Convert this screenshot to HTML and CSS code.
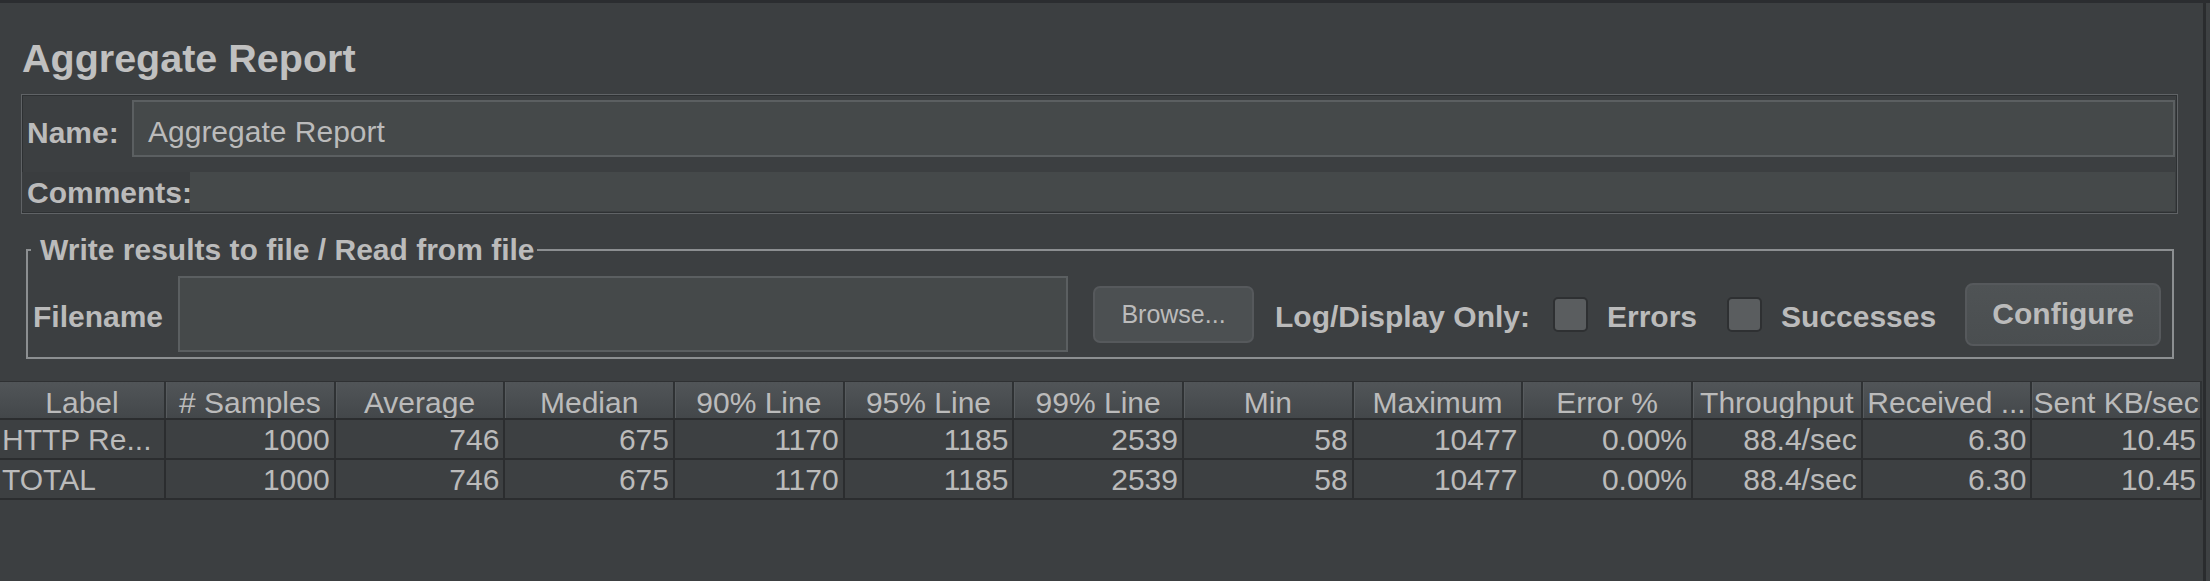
FILE: index.html
```html
<!DOCTYPE html>
<html>
<head>
<meta charset="utf-8">
<title>Aggregate Report</title>
<link rel="stylesheet" href="styles.css">
</head>
<body>
<div class="topstrip"></div>
<div class="frame">
  <div class="content">
    <div class="top-area">
      <div class="title">Aggregate Report</div>
      <div class="name-panel">
        <div class="row-name">
          <div class="lbl name-lbl">Name:</div>
          <div class="name-field">Aggregate Report</div>
        </div>
        <div class="row-comments">
          <div class="lbl comments-lbl">Comments:</div>
          <div class="comments-field"></div>
        </div>
      </div>
      <div class="fileset">
        <div class="legend">Write results to file / Read from file</div>
        <div class="file-row">
          <div class="lbl file-lbl">Filename</div>
          <div class="file-field"></div>
          <div class="btn browse">Browse...</div>
          <div class="lbl log-lbl">Log/Display Only:</div>
          <div class="check check-errors"></div>
          <div class="lbl check-lbl">Errors</div>
          <div class="check check-succ"></div>
          <div class="lbl check-lbl">Successes</div>
          <div class="btn configure">Configure</div>
        </div>
      </div>
    </div>
    <div class="table">
      <div class="thead">
        <div class="th">Label</div>
        <div class="th"># Samples</div>
        <div class="th">Average</div>
        <div class="th">Median</div>
        <div class="th">90% Line</div>
        <div class="th">95% Line</div>
        <div class="th">99% Line</div>
        <div class="th">Min</div>
        <div class="th">Maximum</div>
        <div class="th">Error %</div>
        <div class="th">Throughput</div>
        <div class="th">Received ...</div>
        <div class="th">Sent KB/sec</div>
      </div>
      <div class="trow">
        <div class="td first">HTTP Re...</div>
        <div class="td">1000</div>
        <div class="td">746</div>
        <div class="td">675</div>
        <div class="td">1170</div>
        <div class="td">1185</div>
        <div class="td">2539</div>
        <div class="td">58</div>
        <div class="td">10477</div>
        <div class="td">0.00%</div>
        <div class="td">88.4/sec</div>
        <div class="td">6.30</div>
        <div class="td">10.45</div>
      </div>
      <div class="trow">
        <div class="td first">TOTAL</div>
        <div class="td">1000</div>
        <div class="td">746</div>
        <div class="td">675</div>
        <div class="td">1170</div>
        <div class="td">1185</div>
        <div class="td">2539</div>
        <div class="td">58</div>
        <div class="td">10477</div>
        <div class="td">0.00%</div>
        <div class="td">88.4/sec</div>
        <div class="td">6.30</div>
        <div class="td">10.45</div>
      </div>
    </div>
  </div>
  <div class="edge"></div>
  <div class="rest"></div>
</div>
</body>
</html>
```

FILE: styles.css
```css
html, body {
  margin: 0;
  padding: 0;
}
body {
  width: 2210px;
  height: 581px;
  overflow: hidden;
  background: #3c3f41;
  color: #bbbbbb;
  font-family: "Liberation Sans", Arial, sans-serif;
}
.topstrip {
  height: 3px;
  background: #2b2d30;
}
.frame {
  display: flex;
  height: 578px;
}
.content {
  width: 2203px;
  flex-shrink: 0;
}
.edge {
  width: 3px;
  background: #2a2c2e;
}
.rest {
  flex: 1;
  background: #3e4143;
}
.top-area {
  padding: 0 25px 0 21px;
}
.title {
  font-size: 39.5px;
  font-weight: bold;
  line-height: 46px;
  margin: 32px 0 13px 1px;
  color: #c0c0c0;
  white-space: nowrap;
}
.lbl {
  font-size: 30px;
  font-weight: bold;
  line-height: 34px;
  white-space: nowrap;
  flex-shrink: 0;
}
.name-panel {
  border: 1px solid #606366;
  box-shadow: inset 0 0 0 1px #2e3133;
  padding: 5px 2px 2px 0;
}
.row-name {
  display: flex;
  align-items: center;
  height: 57px;
  padding-left: 5px;
}
.name-lbl {
  width: 105px;
  margin-top: 8px;
}
.name-field {
  flex: 1;
  box-sizing: border-box;
  height: 57px;
  border: 2px solid #5b5f61;
  background: #45494a;
  font-size: 30px;
  line-height: 34px;
  padding: 7px 0 0 14px;
  display: flex;
  align-items: center;
  white-space: nowrap;
}
.row-comments {
  display: flex;
  align-items: center;
  height: 39px;
  margin-top: 15px;
}
.comments-lbl {
  box-sizing: border-box;
  width: 168px;
  height: 39px;
  padding: 4px 0 0 5px;
  line-height: 34px;
  background: #3a3d3f;
}
.comments-field {
  flex: 1;
  height: 39px;
  background: #45494a;
}
.fileset {
  position: relative;
  margin: 35px 4px 0 5px;
  border: 2px solid #8c8f91;
  padding: 25px 13px 5px 5px;
}
.legend {
  position: absolute;
  left: 3px;
  top: -18px;
  padding: 0 2px 0 9px;
  background: #3c3f41;
  font-size: 30px;
  font-weight: bold;
  line-height: 34px;
  white-space: nowrap;
}
.file-row {
  display: flex;
  align-items: center;
  height: 76px;
}
.file-row .lbl {
  margin-top: 5px;
}
.file-lbl {
  width: 145px;
}
.file-field {
  box-sizing: border-box;
  width: 890px;
  height: 76px;
  border: 2px solid #5b5f61;
  background: #45494a;
  flex-shrink: 0;
}
.btn {
  box-sizing: border-box;
  display: flex;
  align-items: center;
  justify-content: center;
  border: 2px solid #56595c;
  background: #4c5052;
  color: #bbbbbb;
  flex-shrink: 0;
}
.browse {
  margin-left: 25px;
  width: 161px;
  height: 57px;
  border-radius: 7px;
  font-size: 25px;
}
.log-lbl {
  margin-left: 21px;
  width: 257px;
}
.check {
  box-sizing: border-box;
  width: 35px;
  height: 35px;
  border: 2px solid #2e3032;
  border-radius: 5px;
  background: #5a5d5f;
  flex-shrink: 0;
}
.check-errors {
  margin-left: 21px;
}
.check-succ {
  margin-left: 30px;
}
.check-lbl {
  margin-left: 19px;
}
.configure {
  margin-left: 29px;
  width: 196px;
  height: 63px;
  border-radius: 8px;
  font-size: 30px;
  font-weight: bold;
  background: linear-gradient(#4f5355, #4a4e50);
}
.table {
  margin-top: 22px;
  width: 2202px;
}
.thead, .trow {
  display: grid;
  grid-template-columns: 166px repeat(12, 1fr);
}
.thead {
  border-top: 1px solid #2f3133;
  border-bottom: 2px solid #2b2d2f;
  background: linear-gradient(#515558, #43474a);
}
.th {
  height: 36px;
  line-height: 34px;
  padding-top: 4px;
  box-sizing: border-box;
  text-align: center;
  font-size: 30px;
  white-space: nowrap;
  overflow: hidden;
  border-right: 2px solid #2f3234;
  box-shadow: inset 1px 0 0 #575b5e;
}
.th:first-child {
  box-shadow: none;
}
.trow {
  border-bottom: 2px solid #2b2d2f;
}
.td {
  height: 38px;
  line-height: 40px;
  font-size: 30px;
  text-align: right;
  padding-right: 4px;
  white-space: nowrap;
  overflow: hidden;
  border-right: 2px solid #2b2d2f;
  background: #3d4042;
}
.td.first {
  text-align: left;
  padding-left: 2px;
  padding-right: 0;
}
```
